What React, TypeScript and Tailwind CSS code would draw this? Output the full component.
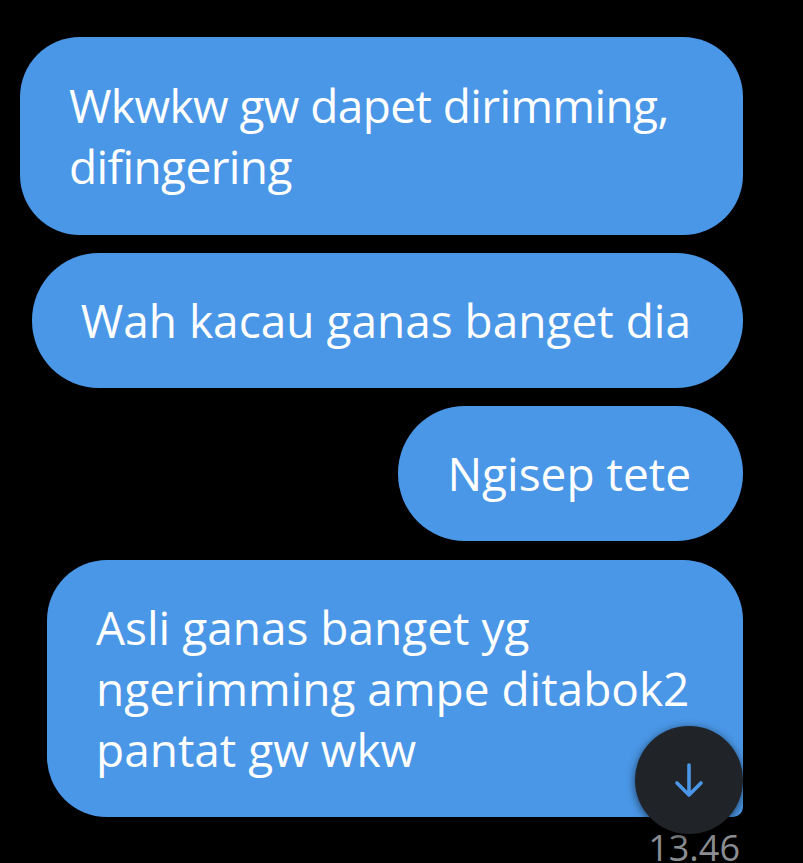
const bubble =
  "bg-[#4a97e7] text-white text-[46px] leading-[61px] pl-[49px] pr-[52px]";

export default function App() {
  return (
    <div className="relative h-[863px] w-[803px] overflow-hidden bg-black [font-family:'Open_Sans',sans-serif]">
      <div className="flex flex-col items-end gap-[18px] pr-[60px] pt-[37px]">
        <div className={`${bubble} w-[723px] rounded-[60px] py-[38px] tracking-[-0.6px]`}>
          Wkwkw gw dapet dirimming, difingering
        </div>
        <div className={`${bubble} rounded-[67px] py-[37px]`}>Wah kacau ganas banget dia</div>
        <div className={`${bubble} rounded-[67px] py-[37px]`}>Ngisep tete</div>
        <div
          className={`${bubble} mt-px w-[696px] rounded-t-[60px] rounded-bl-[60px] rounded-br-[10px] py-[37px]`}
        >
          Asli ganas banget yg ngerimming ampe ditabok2 pantat gw wkw
        </div>
        <div className="mt-[-5px] pr-[3px] text-[36px] leading-none text-[#8a8d91]">13.46</div>
      </div>
      <button
        type="button"
        aria-label="Scroll ke bawah"
        className="absolute left-[635px] top-[726px] flex h-[108px] w-[108px] items-center justify-center rounded-full bg-[#202327] shadow-[0_2px_8px_rgba(0,0,0,0.6)]"
      >
        <svg
          viewBox="0 0 30 36"
          className="h-[36px] w-[30px]"
          fill="none"
          stroke="#4a97e7"
          strokeWidth={3.6}
          strokeLinecap="round"
          strokeLinejoin="round"
        >
          <path d="M15 3v30M3 21l12 12 12-12" />
        </svg>
      </button>
    </div>
  );
}
